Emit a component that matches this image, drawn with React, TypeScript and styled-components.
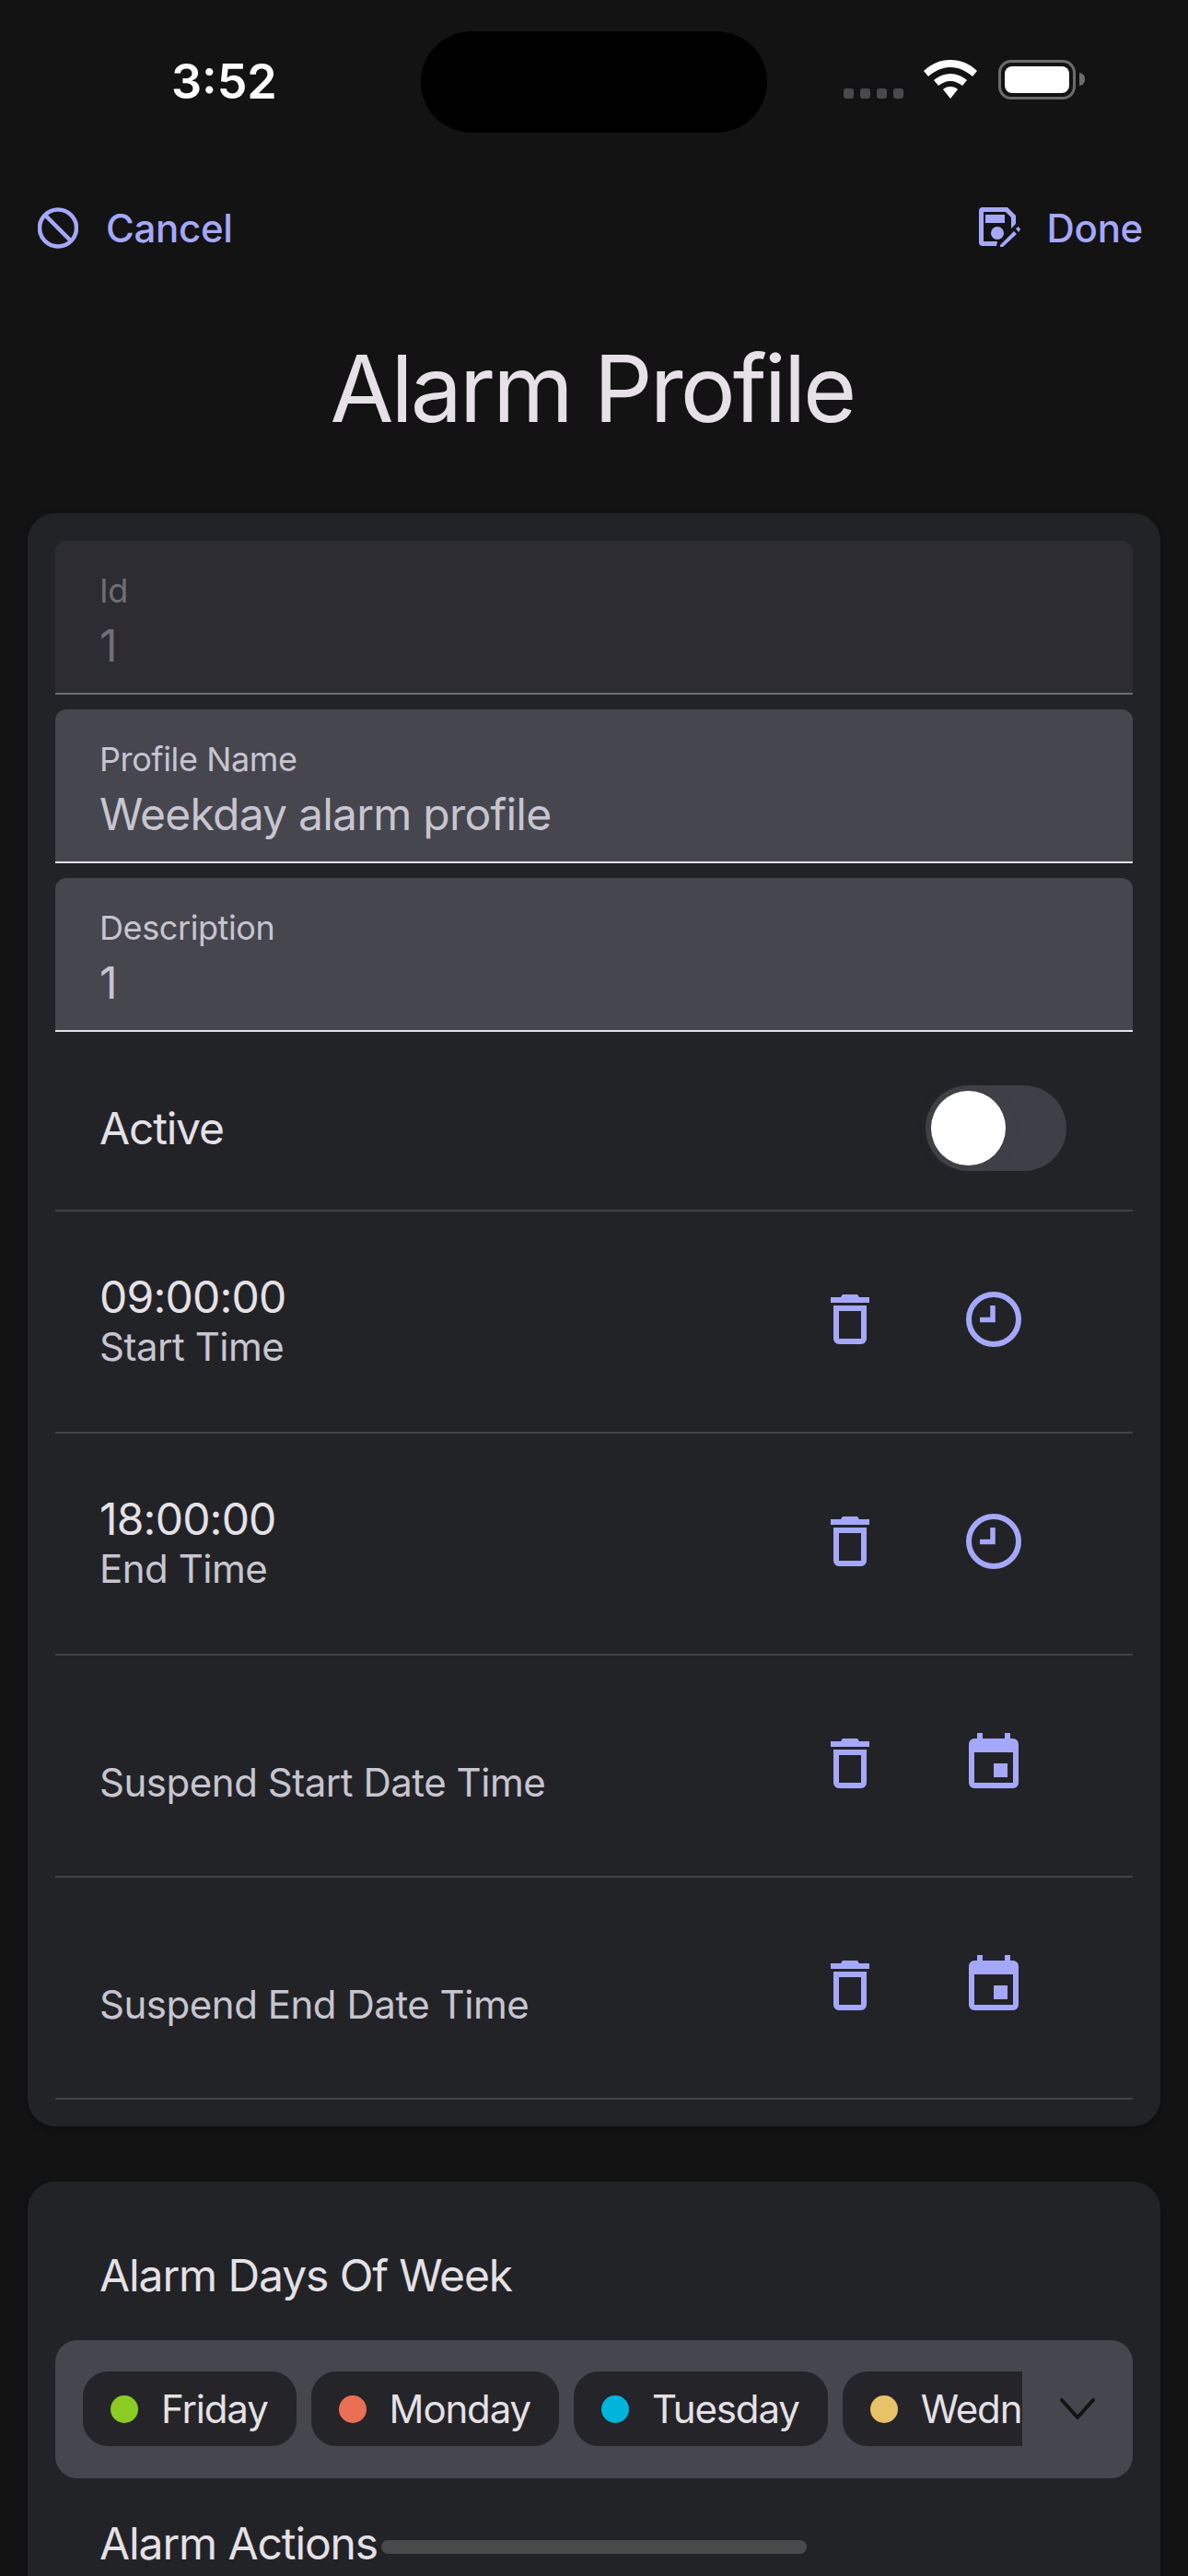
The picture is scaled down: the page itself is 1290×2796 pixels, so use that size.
import React from 'react'
import styled, { createGlobalStyle } from 'styled-components'

const GlobalStyle = createGlobalStyle`
html, body {
  margin: 0;
  padding: 0;
  height: 2796px;
  overflow: hidden;
  background: #131314;
}
* { box-sizing: border-box; }
`

const ACCENT = '#a5a8fa'

const TrashIcon = () => (
  <svg width="42" height="54" viewBox="0 0 42 54" fill={ACCENT}>
    <path d="M0 3h11l2-3h16l2 3h11v6H0z" />
    <path fillRule="evenodd" d="M3 12h36v36a6 6 0 0 1-6 6H9a6 6 0 0 1-6-6zM9 18v30h24V18z" />
  </svg>
)

const ClockIcon = () => (
  <svg width="60" height="60" viewBox="0 0 60 60" fill="none">
    <circle cx="30" cy="30" r="27" stroke={ACCENT} strokeWidth="6" />
    <path d="M29 15v15.5H15" stroke={ACCENT} strokeWidth="5.5" />
  </svg>
)

const CalendarSvg = styled.svg`
margin-bottom: 6px;
`

const CalendarIcon = () => (
  <CalendarSvg width="54" height="60" viewBox="0 0 54 60" fill={ACCENT}>
    <path fillRule="evenodd" d="M6 6h3V0h6v6h24V0h6v6h3a6 6 0 0 1 6 6v42a6 6 0 0 1-6 6H6a6 6 0 0 1-6-6V12a6 6 0 0 1 6-6zM6 21v33h42V21zM27 33h15v15H27z" />
  </CalendarSvg>
)

const BlockIcon = () => (
  <svg width="44" height="45" viewBox="0 0 44 45" fill="none" stroke={ACCENT} strokeWidth="4.5">
    <circle cx="22" cy="22.5" r="20" />
    <path d="M8 8.5l28 28" />
  </svg>
)

const SaveEditIcon = () => (
  <svg width="45" height="44" viewBox="0 0 45 44" fill={ACCENT}>
    <path d="M4 0h27l9 9v9l-5 5V11l-6-6H5v32h15l-1 5H4a4 4 0 0 1-4-4V4a4 4 0 0 1 4-4z" />
    <path d="M7 8h21v9H7z" />
    <circle cx="20" cy="28" r="7" />
    <path d="M23 41l15-15 3 3-15 14h-3z" />
    <path d="M40 23l3-2 2 3-2 3z" />
  </svg>
)

const WifiSvg = styled.svg`
margin-bottom: 1px;
`

const WifiIcon = () => (
  <WifiSvg width="58" height="42" viewBox="0 0 58 42" fill="#fff">
    <path d="M29 0c11 0 21 4 29 12l-5 6C46 12 38 8 29 8S12 12 5 18l-5-6C8 4 18 0 29 0z" />
    <path d="M29 15c7 0 13 3 18 7l-5 6c-4-3-8-5-13-5s-9 2-13 5l-5-6c5-4 11-7 18-7z" />
    <path d="M29 29c3 0 6 1 8 3L29 42l-8-10c2-2 5-3 8-3z" />
  </WifiSvg>
)

const Screen = styled.div`
width: 1290px;
height: 2796px;
overflow: hidden;
position: relative;
background: #131314;
font-family: Inter, "Noto Sans", sans-serif;
`

const StatusBar = styled.div`
height: 217px;
padding-top: 34px;
display: flex;
align-items: flex-start;
`

const Clock = styled.div`
width: 457px;
padding: 25px 0 0 186px;
color: #fff;
font-size: 52px;
line-height: 60px;
font-weight: 600;
`

const Island = styled.div`
width: 376px;
height: 110px;
border-radius: 55px;
background: #000;
`

const StatusIcons = styled.div`
display: flex;
align-items: flex-end;
padding: 31px 0 0 83px;
`

const Signal = styled.div`
display: flex;
gap: 7px;
margin-right: 22px;
padding-bottom: 1px;
`

const SignalDot = styled.span`
width: 11px;
height: 11px;
border-radius: 3px;
background: #4a4a4c;
`

const Battery = styled.div`
width: 84px;
height: 43px;
margin-left: 23px;
padding: 4px;
border: 3px solid #6c6c6e;
border-radius: 14px;
position: relative;
&::after {
  content: '';
  position: absolute;
  right: -13px;
  top: 11px;
  width: 6px;
  height: 14px;
  border-radius: 0 8px 8px 0;
  background: #6c6c6e;
}
`

const BatteryFill = styled.div`
width: 100%;
height: 100%;
border-radius: 8px;
background: #fff;
`

const NavBar = styled.div`
display: flex;
justify-content: space-between;
align-items: center;
height: 60px;
padding: 0 49px 0 41px;
`

const NavButton = styled.div<{ $gap: number }>`
display: flex;
align-items: center;
gap: ${p => p.$gap}px;
color: ${ACCENT};
font-size: 42px;
font-weight: 500;
letter-spacing: -0.3px;
`

const Title = styled.h1`
margin: 0;
padding: 89px 4px 0 0;
text-align: center;
color: #e6e1e6;
font-size: 100px;
line-height: 112px;
font-weight: 400;
letter-spacing: -3px;
`

const Card = styled.section`
margin: 0 30px;
padding: 30px;
border-radius: 30px;
background: #222327;
box-shadow: 0 3px 8px rgba(0, 0, 0, 0.3);
`

const FirstCard = styled(Card)`
margin-top: 79px;
height: 1751px;
`

const SecondCard = styled(Card)`
margin-top: 60px;
padding-top: 74px;
height: 600px;
position: relative;
`

const Field = styled.div<{ $disabled?: boolean }>`
height: 167px;
margin-bottom: 16px;
padding: 32px 48px 0;
border-radius: 12px 12px 0 0;
background: ${p => (p.$disabled ? '#2c2c32' : '#46464f')};
border-bottom: 2px solid ${p => (p.$disabled ? '#6e6e72' : '#e4e1e6')};
`

const FieldLabel = styled.div<{ $disabled?: boolean }>`
font-size: 36px;
line-height: 44px;
letter-spacing: -0.4px;
color: ${p => (p.$disabled ? '#6f6f75' : '#c7c5d0')};
`

const FieldValue = styled.div<{ $disabled?: boolean }>`
margin-top: 10px;
font-size: 48px;
line-height: 56px;
letter-spacing: -0.77px;
color: ${p => (p.$disabled ? '#6f6f75' : '#c7c5d0')};
`

const ActiveRow = styled.div`
height: 179px;
padding: 0 72px 0 48px;
display: flex;
align-items: center;
justify-content: space-between;
border-bottom: 2px solid #434347;
`

const RowText = styled.div`
font-size: 48px;
letter-spacing: -1.2px;
color: #e4e1e6;
`

const Toggle = styled.div`
width: 153px;
height: 93px;
padding: 6px;
border-radius: 47px;
background: #3f4047;
`

const Knob = styled.div`
width: 81px;
height: 81px;
border-radius: 50%;
background: #fff;
box-shadow: 0 0 12px rgba(70, 70, 74, 0.6);
`

const TimeRow = styled.div`
height: 241px;
padding: 0 73px 0 48px;
display: flex;
justify-content: space-between;
border-bottom: 2px solid #434347;
`

const TimeText = styled.div`
padding-top: 65px;
`

const TimeValue = styled.div`
min-height: 47px;
font-size: 48px;
line-height: 56px;
color: #e4e1e6;
letter-spacing: -0.8px;
`

const TimeLabel = styled.div`
margin-top: 1px;
font-size: 42px;
line-height: 50px;
letter-spacing: -0.47px;
color: #c7c5d0;
`

const RowIcons = styled.div`
padding-top: 87px;
display: flex;
`

const IconSlot = styled.div`
width: 156px;
height: 60px;
display: flex;
justify-content: center;
align-items: center;
`

const SectionTitle = styled.div`
padding-left: 48px;
font-size: 48px;
line-height: 56px;
letter-spacing: -1.1px;
color: #e4e1e6;
`

const ChipBox = styled.div`
height: 150px;
margin-top: 42px;
padding: 34px 18px 0 30px;
border-radius: 24px;
background: #46464f;
display: flex;
justify-content: space-between;
`

const ChipClip = styled.div`
width: 1020px;
height: 81px;
display: flex;
gap: 16px;
overflow: hidden;
`

const Chip = styled.div`
flex: none;
height: 81px;
padding: 0 31px 0 30px;
display: flex;
align-items: center;
gap: 25px;
border-radius: 27px;
background: #252429;
color: #e4e1e6;
font-size: 42px;
letter-spacing: -1.15px;
`

const Dot = styled.span<{ $color: string }>`
width: 30px;
height: 30px;
border-radius: 50%;
background: ${p => p.$color};
`

const Chevron = styled.svg`
margin: 28px 22px 0 0;
`

const ActionsTitle = styled(SectionTitle)`
margin-top: 43px;
`

const ScrollThumb = styled.div`
position: absolute;
left: 384px;
top: 389px;
width: 462px;
height: 15px;
border-radius: 8px;
background: #4a4a4a;
`

const times = [
  { value: '09:00:00', label: 'Start Time', calendar: false },
  { value: '18:00:00', label: 'End Time', calendar: false },
  { value: '', label: 'Suspend Start Date Time', calendar: true },
  { value: '', label: 'Suspend End Date Time', calendar: true },
]

const days = [
  { name: 'Friday', color: '#8ccb23' },
  { name: 'Monday', color: '#e97055' },
  { name: 'Tuesday', color: '#00b4dc' },
  { name: 'Wednesday', color: '#e8c268' },
]

const App: React.FC = () => {
  return (
    <Screen>
      <GlobalStyle />
      <StatusBar>
        <Clock>3:52</Clock>
        <Island />
        <StatusIcons>
          <Signal>
            <SignalDot />
            <SignalDot />
            <SignalDot />
            <SignalDot />
          </Signal>
          <WifiIcon />
          <Battery>
            <BatteryFill />
          </Battery>
        </StatusIcons>
      </StatusBar>
      <NavBar>
        <NavButton $gap={30}><BlockIcon />Cancel</NavButton>
        <NavButton $gap={29}><SaveEditIcon />Done</NavButton>
      </NavBar>
      <Title>Alarm Profile</Title>
      <FirstCard>
        <Field $disabled>
          <FieldLabel $disabled>Id</FieldLabel>
          <FieldValue $disabled>1</FieldValue>
        </Field>
        <Field>
          <FieldLabel>Profile Name</FieldLabel>
          <FieldValue>Weekday alarm profile</FieldValue>
        </Field>
        <Field>
          <FieldLabel>Description</FieldLabel>
          <FieldValue>1</FieldValue>
        </Field>
        <ActiveRow>
          <RowText>Active</RowText>
          <Toggle><Knob /></Toggle>
        </ActiveRow>
        {times.map(t => (
          <TimeRow key={t.label}>
            <TimeText>
              <TimeValue>{t.value}</TimeValue>
              <TimeLabel>{t.label}</TimeLabel>
            </TimeText>
            <RowIcons>
              <IconSlot><TrashIcon /></IconSlot>
              <IconSlot>{t.calendar ? <CalendarIcon /> : <ClockIcon />}</IconSlot>
            </RowIcons>
          </TimeRow>
        ))}
      </FirstCard>
      <SecondCard>
        <SectionTitle>Alarm Days Of Week</SectionTitle>
        <ChipBox>
          <ChipClip>
            {days.map(d => (
              <Chip key={d.name}>
                <Dot $color={d.color} />
                {d.name}
              </Chip>
            ))}
          </ChipClip>
          <Chevron width="40" height="26" viewBox="0 0 40 26" fill="none" stroke="#131314" strokeWidth="4" strokeLinecap="round" strokeLinejoin="round">
            <path d="M3 3l17 19L37 3" />
          </Chevron>
        </ChipBox>
        <ActionsTitle>Alarm Actions</ActionsTitle>
        <ScrollThumb />
      </SecondCard>
    </Screen>
  )
}

export default App
